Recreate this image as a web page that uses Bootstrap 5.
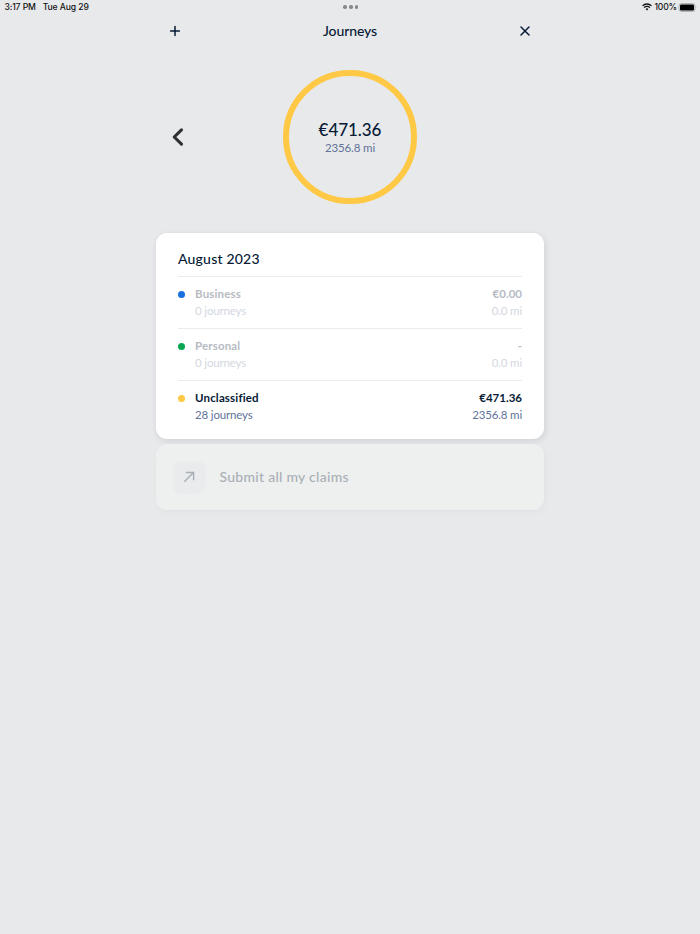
<!DOCTYPE html>
<html lang="en">
<head>
<meta charset="utf-8">
<meta name="viewport" content="width=device-width, initial-scale=1">
<title>Journeys</title>
<link href="https://cdn.jsdelivr.net/npm/bootstrap@5.3.0/dist/css/bootstrap.min.css" rel="stylesheet">
<style>
body{background:#e8e9eb;color:#071a35;font-family:Lato,"Noto Sans",sans-serif;font-size:11.5px;line-height:17px;min-height:934px}
svg{display:block;flex:none}
.status-bar{height:14px;font:500 8.6px/14px Inter,sans-serif;color:#111;padding:0 3px 0 4.5px}
.status-bar .side{width:120px;letter-spacing:-.17px;word-spacing:.3px}
.status-bar .date{margin-left:7px}
.status-bar .pct{margin-right:1px}
.dots{gap:2.2px}
.dots i{width:3.6px;height:3.6px;border-radius:50%;background:#87888a}
.page{width:388px}
.top-bar{height:34px;padding:0 13px}
.title{font-size:14px;font-weight:500;letter-spacing:-.1px;padding-bottom:2px}
.summary{height:134px;margin-top:22px;padding:0 14px;grid-template-columns:1fr 134px 1fr}
.ring{width:134px;height:134px;border:6px solid #ffc845;border-radius:50%;padding-bottom:1px}
.total{font-size:17px;font-weight:500;line-height:21px;letter-spacing:-.05px}
.distance{font-size:11.5px;line-height:15px;letter-spacing:-.12px}
.muted-blue{color:#61739a}
.month-card{height:206px;margin-top:29px;padding:0 22px;border-radius:11px;background:#fff;box-shadow:1px 2px 6px rgba(20,30,45,.12)}
.month{height:43px;padding-top:14px;font-size:14px;font-weight:500;line-height:23px;letter-spacing:.2px}
.entry{height:52.1px;border-top:1px solid #eaebee;padding-top:8px}
.entry .name,.entry .amount{font-weight:700}
.entry .name{letter-spacing:.16px}
.entry .detail{letter-spacing:-.16px}
.entry .dot{width:7px;height:7px;border-radius:50%;margin:5.5px 10px 0 0}
.idle .name,.idle .amount{color:#b6bbc3}
.idle .detail{color:#d3d7e0}
.claims{height:66px;margin-top:5px;padding-left:16.5px;border-radius:11px;background:#eef0ef;box-shadow:1px 2px 6px rgba(20,30,45,.035);color:#a9afb6}
.claims .tile{width:33px;height:33px;border-radius:9px;background:#e9ebed}
.claims .label{font-size:14px;font-weight:500;margin-left:14px;padding-bottom:2px;letter-spacing:.27px}
</style>
</head>
<body>
<header class="status-bar d-flex justify-content-between align-items-center">
  <div class="side text-nowrap">3:17 PM<span class="date">Tue Aug 29</span></div>
  <div class="dots d-flex"><i></i><i></i><i></i></div>
  <div class="side d-flex justify-content-end align-items-center">
    <svg width="10" height="8" viewBox="0 0 10 8" fill="none" stroke="#111" stroke-width="1.3"><path d="M.5 2.9a6.3 6.3 0 0 1 9 0M2.1 4.6a4.1 4.1 0 0 1 5.8 0"/><path d="M3.6 5.9a2 2 0 0 1 2.8 0L5 7.5z" fill="#111" stroke="none"/></svg>
    <span class="pct">&nbsp;100%</span>
    <svg width="19" height="9" viewBox="0 0 19 9"><rect x="1" y=".6" width="16" height="7.8" rx="2.3" fill="none" stroke="#a5a6a8" stroke-width=".9"/><rect x="2" y="1.5" width="14" height="6" rx="1.3" fill="#000"/><path d="M17.8 3.2q1.2 1.3 0 2.6z" fill="#a5a6a8"/></svg>
  </div>
</header>
<main class="page mx-auto">
  <nav class="top-bar d-flex justify-content-between align-items-center">
    <svg width="12" height="12" viewBox="0 0 12 12" stroke="#071a35" stroke-width="1.5" stroke-linecap="round"><path d="M6 1.6v8.8M1.6 6h8.8"/></svg>
    <div class="title">Journeys</div>
    <svg width="12" height="12" viewBox="0 0 12 12" stroke="#071a35" stroke-width="1.5" stroke-linecap="round"><path d="M2 2l8 8M10 2l-8 8"/></svg>
  </nav>
  <section class="summary d-grid align-items-center">
    <svg width="16" height="20" viewBox="0 0 16 20" fill="none" stroke="#303133" stroke-width="3.1" stroke-linecap="round" stroke-linejoin="round"><path d="M11.5 2.8L4.2 10l7.3 7.2"/></svg>
    <div class="ring d-flex flex-column align-items-center justify-content-center">
      <div class="total">€471.36</div>
      <div class="distance muted-blue">2356.8 mi</div>
    </div>
  </section>
  <section class="month-card">
    <div class="month">August 2023</div>
    <div class="entry idle d-flex">
      <span class="dot" style="background:#176fe0"></span>
      <div><div class="name">Business</div><div class="detail">0 journeys</div></div>
      <div class="ms-auto text-end"><div class="amount">€0.00</div><div class="detail">0.0 mi</div></div>
    </div>
    <div class="entry idle d-flex">
      <span class="dot" style="background:#07a653"></span>
      <div><div class="name">Personal</div><div class="detail">0 journeys</div></div>
      <div class="ms-auto text-end"><div class="amount">-</div><div class="detail">0.0 mi</div></div>
    </div>
    <div class="entry d-flex">
      <span class="dot" style="background:#ffc845"></span>
      <div><div class="name">Unclassified</div><div class="detail muted-blue">28 journeys</div></div>
      <div class="ms-auto text-end"><div class="amount">€471.36</div><div class="detail muted-blue">2356.8 mi</div></div>
    </div>
  </section>
  <section class="claims d-flex align-items-center">
    <div class="tile d-flex align-items-center justify-content-center">
      <svg width="12" height="12" viewBox="0 0 12 12" fill="none" stroke="#a9afb6" stroke-width="1.4"><path d="M1.3 10.7L10.5 1.5M2.8 1.5h7.8v7.8"/></svg>
    </div>
    <div class="label">Submit all my claims</div>
  </section>
</main>
<script src="https://cdn.jsdelivr.net/npm/bootstrap@5.3.0/dist/js/bootstrap.bundle.min.js"></script>
</body>
</html>
